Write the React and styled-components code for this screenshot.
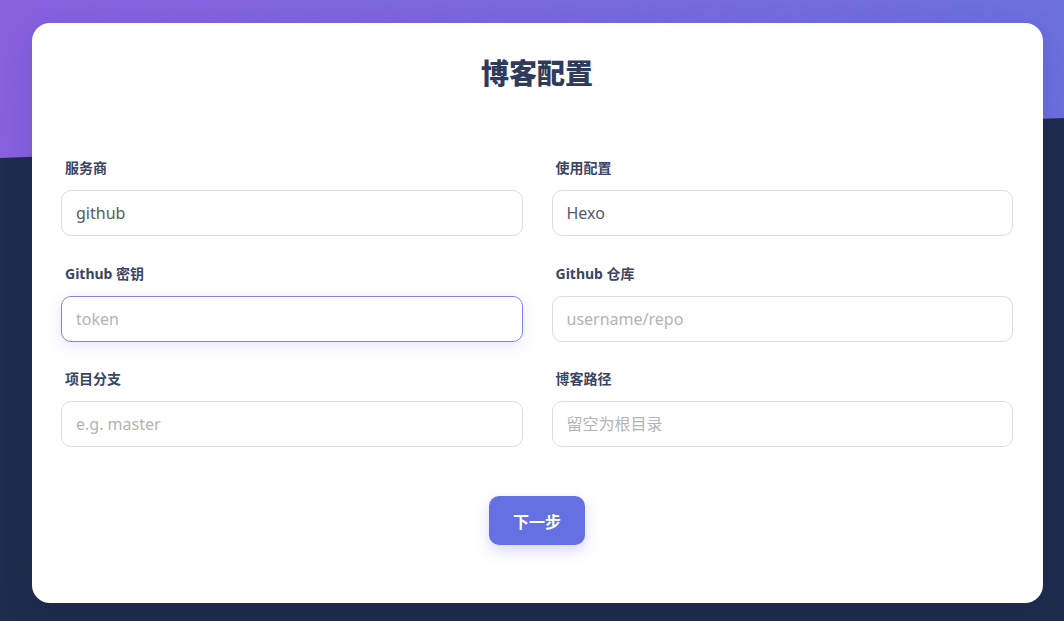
import React from "react"
import styled, { createGlobalStyle } from "styled-components"

const GlobalStyle = createGlobalStyle`
  html, body {
    margin: 0;
    padding: 0;
    height: 100%;
  }
  body {
    background: #1f2c4e;
    font-family: "Noto Sans", "Noto Sans CJK SC", sans-serif;
  }
`

const Page = styled.div`
  position: relative;
  min-height: 621px;
  box-sizing: border-box;
  padding: 23px 21px 17px 32px;
`

// purple band with a slanted lower edge behind the card
const Backdrop = styled.div`
  position: absolute;
  left: 0;
  top: 0;
  right: 0;
  height: 160px;
  background: linear-gradient(100deg, #8860e0 0%, #7a68e0 50%, #6c70e0 100%);
  clip-path: polygon(0 0, 100% 0, 100% 118px, 0 158px);
`

const Card = styled.div`
  position: relative;
  background: #ffffff;
  border-radius: 18px;
  padding: 30px 30px 58px 29px;
  box-shadow: 0 10px 30px rgba(20, 30, 60, 0.15);
`

const Title = styled.h1`
  margin: 0 0 65px;
  text-align: center;
  font-size: 28px;
  line-height: 40px;
  font-weight: 800;
  color: #2f3b5c;
`

const Grid = styled.div`
  display: grid;
  grid-template-columns: 1fr 1fr;
  column-gap: 29px;
  row-gap: 27.5px;
`

const Field = styled.div`
  display: flex;
  flex-direction: column;
  gap: 12px;
`

const Label = styled.label`
  padding-left: 4px;
  font-size: 14px;
  line-height: 20px;
  font-weight: 700;
  color: #3a4565;
`

const Input = styled.input`
  box-sizing: border-box;
  height: 46px;
  width: 100%;
  padding: 0 14px;
  border: 1px solid ${p => (p.$focused ? "#7f84e4" : "#dcdde0")};
  border-radius: 10px;
  background: #fff;
  font-family: "Noto Sans", "Noto Sans CJK SC", sans-serif;
  font-size: 16px;
  color: #555a62;
  outline: none;
  box-shadow: ${p => (p.$focused ? "0 4px 14px rgba(99, 102, 241, 0.16)" : "none")};

  &::placeholder {
    color: #b2b4b8;
  }
`

const Actions = styled.div`
  display: flex;
  justify-content: center;
  margin-top: 49px;
`

const Button = styled.button`
  height: 49px;
  padding: 0 24px;
  border: none;
  border-radius: 10px;
  background: #6570e3;
  color: #fff;
  font-family: "Noto Sans", "Noto Sans CJK SC", sans-serif;
  font-size: 16px;
  font-weight: 700;
  box-shadow: 0 6px 14px rgba(99, 102, 241, 0.25);
  cursor: pointer;
`

const fields = [
  { label: "服务商", value: "github" },
  { label: "使用配置", value: "Hexo" },
  { label: "Github 密钥", placeholder: "token", focused: true },
  { label: "Github 仓库", placeholder: "username/repo" },
  { label: "项目分支", placeholder: "e.g. master" },
  { label: "博客路径", placeholder: "留空为根目录" },
]

export default function App() {
  return (
    <Page>
      <GlobalStyle />
      <Backdrop />
      <Card>
        <Title>博客配置</Title>
        <Grid>
          {fields.map(f => (
            <Field key={f.label}>
              <Label>{f.label}</Label>
              <Input
                defaultValue={f.value}
                placeholder={f.placeholder}
                $focused={f.focused}
              />
            </Field>
          ))}
        </Grid>
        <Actions>
          <Button>下一步</Button>
        </Actions>
      </Card>
    </Page>
  )
}
